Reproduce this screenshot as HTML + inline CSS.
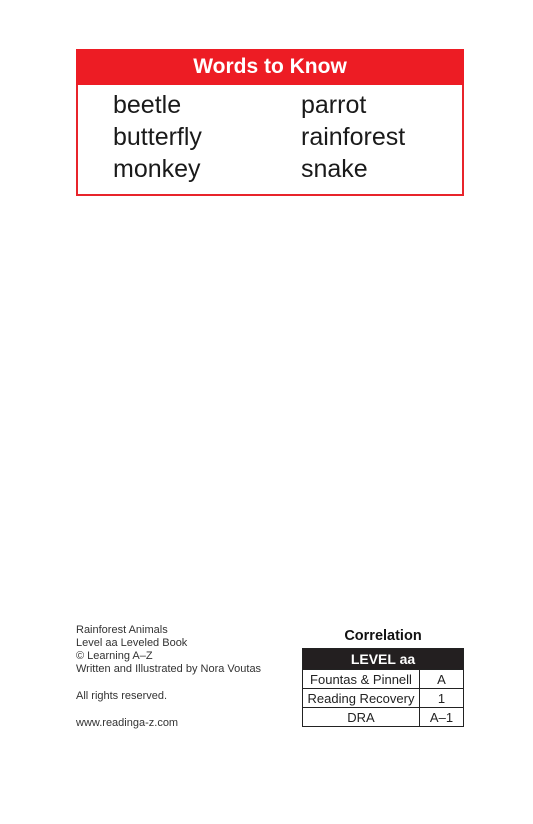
<!DOCTYPE html>
<html><head><style>
body{margin:0;width:533px;height:824px;background:#fff;position:relative;font-family:"Liberation Sans",sans-serif;color:#222;}
.box{position:absolute;left:76px;top:49px;width:384px;height:145px;border:2px solid #e8242b;border-top:none;}
.hd{position:absolute;left:76px;top:49px;width:388px;height:36px;background:#ed1c24;color:#fff;font-weight:bold;font-size:21px;text-align:center;line-height:36px;}
.w{position:absolute;font-size:25px;color:#1a1a1a;}
.s{position:absolute;left:76px;font-size:11px;color:#333;}
table{position:absolute;left:302px;top:648px;width:162px;border-collapse:collapse;font-size:13px;}
td{border:1px solid #222;text-align:center;height:18px;padding:0;}
</style></head><body>
<div class="box"></div>
<div class="hd">Words to Know</div>
<div class="w" style="left:113px;top:91px">beetle</div>
<div class="w" style="left:113px;top:123px">butterfly</div>
<div class="w" style="left:113px;top:155px">monkey</div>
<div class="w" style="left:301px;top:91px">parrot</div>
<div class="w" style="left:301px;top:123px">rainforest</div>
<div class="w" style="left:301px;top:155px">snake</div>
<div class="s" style="top:624px">Rainforest Animals</div>
<div class="s" style="top:637px">Level aa Leveled Book</div>
<div class="s" style="top:650px">© Learning A–Z</div>
<div class="s" style="top:663px">Written and Illustrated by Nora Voutas</div>
<div class="s" style="top:690px">All rights reserved.</div>
<div class="s" style="top:717px">www.readinga-z.com</div>
<div style="position:absolute;left:302px;width:162px;top:628px;text-align:center;font-weight:bold;font-size:14.5px;color:#111">Correlation</div>
<table>
<tr><td colspan="2" style="background:#231f20;color:#fff;font-weight:bold;font-size:14px;height:20px">LEVEL aa</td></tr>
<tr><td style="width:116px">Fountas &amp; Pinnell</td><td>A</td></tr>
<tr><td>Reading Recovery</td><td>1</td></tr>
<tr><td>DRA</td><td>A–1</td></tr>
</table>
</body></html>
